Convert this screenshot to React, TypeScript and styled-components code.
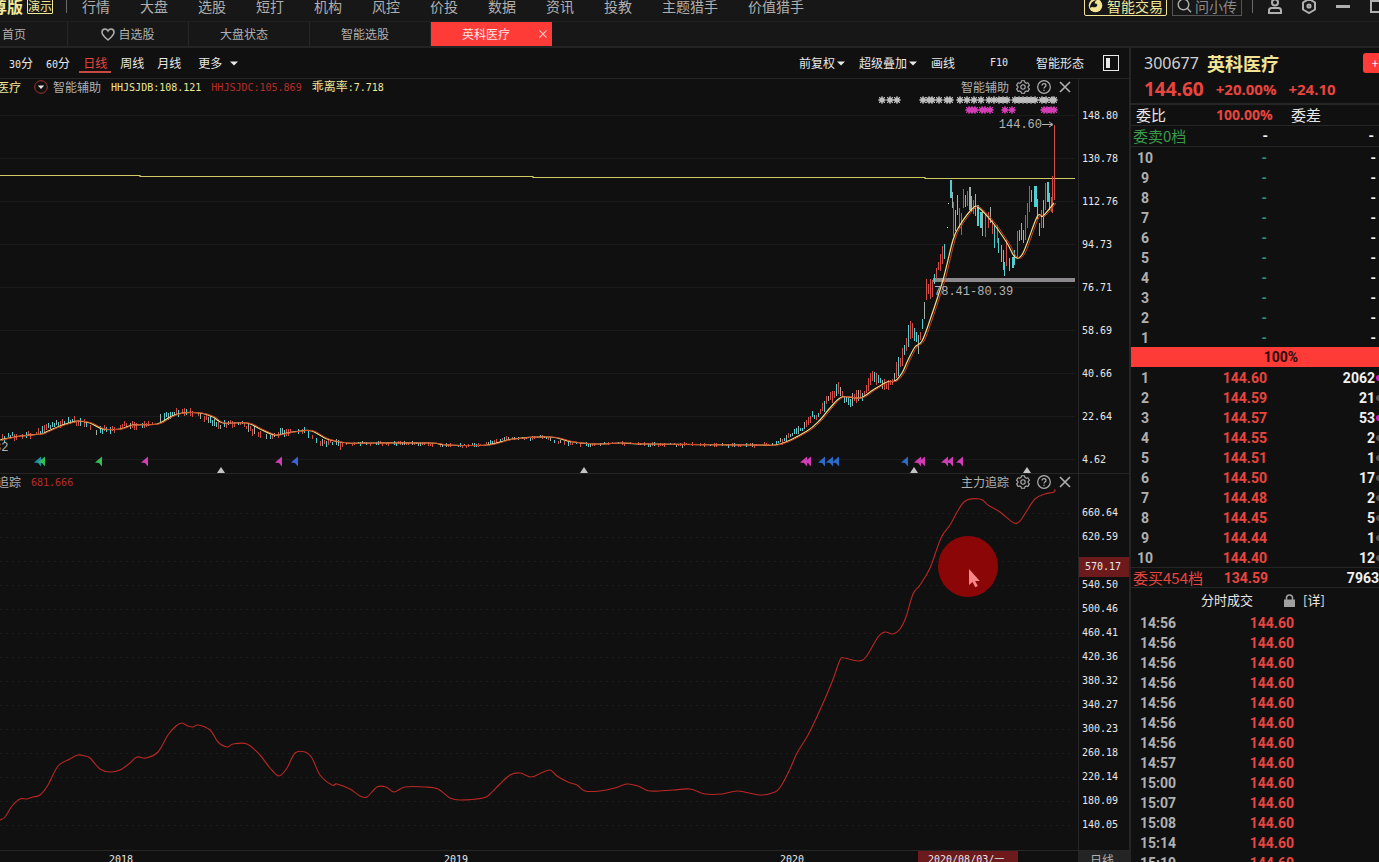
import React from "react";
import styled, { createGlobalStyle } from "styled-components";

const CJK = `"Noto Sans CJK SC", sans-serif`;
const MONO = `"DejaVu Sans Mono", "Noto Sans CJK SC", monospace`;
const FIGURES = `Roboto, "Noto Sans CJK SC", sans-serif`;

const color = {
  page: "#101010",
  bar: "#171717",
  line: "#262626",
  text: "#b0b0b0",
  bright: "#e8e8e8",
  red: "#e8453f",
  hot: "#ff3b38",
  yellow: "#efe79a",
  gold: "#f3e394",
  green: "#3a9c49",
  magenta: "#d23cb4",
  blue: "#2c6cc8",
};

const GlobalStyle = createGlobalStyle`
  * { box-sizing: border-box; }
  body { margin: 0; background: ${color.page}; color: ${color.text}; font: 12px/16px ${CJK}; }
  button, input { font: inherit; color: inherit; background: none; border: 0; padding: 0; margin: 0; }
  button { cursor: pointer; white-space: nowrap; }
  svg { display: block; flex: none; }
`;

const Shell = styled.div`
  display: flex;
  flex-direction: column;
  height: 100vh;
  overflow: hidden;
`;

/* ---------- top bar ---------- */

const TopBar = styled.header`
  display: flex;
  align-items: center;
  flex: none;
  height: 32px;
  margin-top: -10px;
  background: ${color.bar};
  border-bottom: 1px solid #202020;
  font-size: 14px;
  line-height: 20px;
  overflow: hidden;
`;

const Brand = styled.strong`
  margin-left: -9px;
  font-size: 16px;
  color: ${color.yellow};
  white-space: nowrap;
`;

const DemoBadge = styled.span`
  margin: 0 13px 0 4px;
  border: 1px solid ${color.yellow};
  border-radius: 1px;
  color: ${color.yellow};
  font-size: 12px;
  line-height: 14px;
  white-space: nowrap;
`;

const Divider = styled.i`
  width: 1px;
  height: 14px;
  background: #6a6a6a;
`;

const MainNav = styled.nav`
  display: flex;
  flex: 1;
  gap: 30px;
  min-width: 0;
  padding-left: 15px;
  overflow: hidden;
`;

const NavLink = styled.a`
  color: ${color.text};
  text-decoration: none;
  white-space: nowrap;
`;

const TradeButton = styled.button`
  display: flex;
  align-items: center;
  gap: 4px;
  height: 21px;
  padding: 0 3px;
  border: 1px solid ${color.gold};
  border-radius: 2px;
  color: ${color.yellow};
`;

const SearchBox = styled.label`
  display: flex;
  align-items: center;
  gap: 3px;
  height: 21px;
  margin: 0 10px 0 5px;
  padding: 0 4px;
  border: 1px solid #555;
  input { width: 42px; height: 19px; outline: 0; }
  input::placeholder { color: #8c8c8c; opacity: 1; }
`;

const WindowButtons = styled.div`
  display: flex;
  align-items: center;
  gap: 18px;
  margin: 0 -6px 0 14px;
`;

/* ---------- page tabs ---------- */

const TabBar = styled.nav`
  display: flex;
  flex: none;
  height: 26px;
  background: ${color.bar};
  border-bottom: 2px solid #232323;
`;

const Tab = styled.button<{ $active?: boolean; $first?: boolean; $shift?: boolean }>`
  position: relative;
  display: flex;
  align-items: center;
  justify-content: ${(p) => (p.$first ? "flex-start" : "center")};
  gap: 3px;
  width: ${(p) => (p.$first ? 68 : 121)}px;
  padding: 0 ${(p) => (p.$shift ? 10 : 0)}px 0 ${(p) => (p.$first ? 2 : 0)}px;
  border-right: 1px solid ${(p) => (p.$active ? color.hot : color.line)};
  background: ${(p) => (p.$active ? color.hot : "transparent")};
  color: ${(p) => (p.$active ? "#ffe4e0" : color.text)};
`;

const TabClose = styled.span`
  position: absolute;
  right: 3px;
  top: 7px;
`;

/* ---------- body ---------- */

const Body = styled.main`
  display: flex;
  flex: 1;
  min-height: 0;
`;

const ChartColumn = styled.section`
  display: flex;
  flex: 1;
  flex-direction: column;
  min-width: 0;
`;

const Toolbar = styled.div`
  display: flex;
  align-items: center;
  flex: none;
  height: 31px;
  padding: 0 10px 0 5px;
  border-bottom: 1px solid ${color.line};
  color: ${color.bright};
`;

const Periods = styled.div`
  display: flex;
  flex: 1;
  gap: 5px;
`;

const Period = styled.button<{ $active?: boolean }>`
  height: 20px;
  padding: 2px 4px 0;
  border-bottom: 2px solid ${(p) => (p.$active ? "#c84844" : "transparent")};
  color: ${(p) => (p.$active ? color.red : "inherit")};
`;

const MorePeriods = styled(Period)`
  display: flex;
  align-items: center;
  gap: 8px;
  margin-left: 4px;
`;

const ToolButton = styled.button`
  display: flex;
  align-items: center;
  gap: 2px;
`;

const Tools = styled.div`
  display: flex;
  align-items: center;
  gap: 14px;
  margin-right: 35px;
`;

const WideTools = styled.div`
  display: flex;
  align-items: center;
  gap: 19px;
  button:first-child { margin-right: 9px; }
`;

const Mono = styled.span`
  font: 10px/16px ${MONO};
`;

const Pane = styled.section<{ $grow?: boolean }>`
  display: flex;
  flex: ${(p) => (p.$grow ? "1 1 0" : "none")};
  min-height: 0;
  border-bottom: 1px solid ${color.line};
  overflow: hidden;
`;

const Plot = styled.div`
  position: relative;
  flex: 1;
  min-width: 0;
`;

const Chart = styled.svg<{ $height: number }>`
  width: 100%;
  height: ${(p) => p.$height}px;
`;

const PaneHead = styled.div`
  position: absolute;
  inset: 0 0 auto 0;
  display: flex;
  align-items: center;
  justify-content: space-between;
  height: 16px;
  padding-right: 6px;
`;

const Legend = styled.div`
  display: flex;
  align-items: center;
  gap: 10px;
  margin-left: -3px;
  white-space: nowrap;
`;

const LegendName = styled.span`
  display: flex;
  align-items: center;
  gap: 5px;
  margin-left: 3px;
`;

const Value = styled.span<{ $tone: string }>`
  font: 12px/16px ${CJK};
  color: ${(p) => p.$tone};
`;

const PaneActions = styled.div`
  display: flex;
  align-items: center;
  gap: 7px;
`;

const PlotLabel = styled.span`
  position: absolute;
  font: 12px/14px "Liberation Mono", monospace;
  color: #b4b4b4;
  white-space: nowrap;
`;

const Scale = styled.ol<{ $top: number; $step: number }>`
  position: relative;
  flex: none;
  width: 51px;
  margin: 0;
  padding: ${(p) => p.$top}px 0 0 3px;
  border-left: 1px solid ${color.line};
  list-style: none;
  font: 10px/16px ${MONO};
  color: ${color.bright};
  li { height: ${(p) => p.$step}px; line-height: ${(p) => p.$step}px; }
  li:last-of-type { margin-bottom: -10px; }
`;

const ScaleCursor = styled.div`
  position: absolute;
  left: 0;
  top: 83px;
  width: 50px;
  height: 20px;
  padding-left: 6px;
  background: #6c1a1c;
  line-height: 20px;
`;

const TimeAxis = styled.div`
  display: flex;
  flex: none;
  height: 11px;
  overflow: hidden;
  line-height: 18px;
`;

const TimeTrack = styled.div`
  position: relative;
  flex: 1;
  font: 10px/18px ${MONO};
  color: ${color.bright};
`;

const TimeMark = styled.time<{ $cursor?: boolean }>`
  position: absolute;
  top: 0;
  width: ${(p) => (p.$cursor ? "100px" : "auto")};
  padding-left: ${(p) => (p.$cursor ? 10 : 0)}px;
  background: ${(p) => (p.$cursor ? "#6c1a1c" : "transparent")};
  white-space: nowrap;
`;

const AxisPeriod = styled.span`
  width: 51px;
  padding-left: 12px;
  background: #242424;
`;

/* ---------- quote panel ---------- */

const Quote = styled.aside`
  flex: none;
  width: 250px;
  border-left: 2px solid #252525;
  overflow: hidden;
`;

const QuoteHead = styled.div`
  height: 57px;
  padding: 2px 0 0 13px;
  border-bottom: 2px solid ${color.line};
`;

const QuoteLine = styled.div<{ $gap: number }>`
  display: flex;
  align-items: center;
  gap: ${(p) => p.$gap}px;
  height: 26px;
  white-space: nowrap;
`;

const Code = styled.span`
  font: 16px/24px "Noto Sans", sans-serif;
  color: #d0d0d0;
`;

const StockName = styled.h1`
  margin: 0;
  font: bold 18px/24px ${CJK};
  color: ${color.gold};
`;

const AddButton = styled.button`
  width: 24px;
  height: 20px;
  margin: 0 -8px 0 auto;
  border-radius: 3px;
  background: ${color.hot};
  color: #fff;
`;

const Price = styled.strong<{ $big?: boolean }>`
  font: bold ${(p) => (p.$big ? 19 : 15)}px/26px "Open Sans", sans-serif;
  color: ${color.red};
`;

const RatioRow = styled.div`
  display: grid;
  grid-template-columns: 80px 75px 1fr;
  height: 21px;
  padding-left: 5px;
  border-bottom: 1px solid ${color.line};
  font-size: 15px;
  line-height: 20px;
  color: ${color.bright};
  strong { font: bold 14px/20px "Open Sans", sans-serif; color: ${color.red}; }
`;

const Book = styled.table`
  width: 100%;
  border-collapse: collapse;
  table-layout: fixed;
  font: bold 14px/18px ${FIGURES};
  color: ${color.bright};
  th, td { height: 20px; padding: 2px 0 0; font-weight: bold; text-align: right; }
  th { width: 28px; text-align: center; color: ${color.text}; }
  td { color: ${color.red}; }
  td:last-child { color: #f2f2f2; }
  td:nth-child(2) { width: 108px; }
`;

const AskBook = styled(Book)`
  td { color: #2f8f77; }
  td:last-child { padding-right: 3px; }
`;

const Dot = styled.i<{ $tone: string }>`
  display: inline-block;
  width: 3px;
  height: 6px;
  margin: 0 0 2px 1px;
  border-radius: 3px 0 0 3px;
  background: ${(p) => p.$tone};
`;

const SumRow = styled.div<{ $tone: string; $line?: boolean }>`
  display: grid;
  grid-template-columns: 135px 1fr;
  height: 21px;
  padding: 0 0 0 2px;
  border-bottom: 1px solid ${color.line};
  border-top: ${(p) => (p.$line ? "1px solid " + color.line : "0")};
  font-size: 15px;
  line-height: 20px;
  color: ${(p) => p.$tone};
  white-space: nowrap;
`;

const SumLabel = styled.span`
  display: flex;
  justify-content: space-between;
  b { font: bold 14px/20px ${FIGURES}; }
`;

const SumVolume = styled.b<{ $inset?: boolean }>`
  padding-right: ${(p) => (p.$inset ? 5 : 0)}px;
  font: bold 14px/20px ${FIGURES};
  color: #f2f2f2;
  text-align: right;
`;

const Empty = styled.b`
  color: #f2f2f2;
`;

const RatioBar = styled.div`
  height: 20px;
  padding-left: 52px;
  background: ${color.hot};
  color: #2a0c0c;
  font: bold 14px/20px ${FIGURES};
  text-align: center;
`;

const TradesHead = styled.div`
  display: flex;
  align-items: center;
  height: 24px;
  padding-left: 70px;
  font-size: 13px;
  color: ${color.bright};
  h2 { margin: 0 31px 0 0; font: inherit; }
  svg { margin-right: 8px; }
`;

const Trades = styled(Book)`
  th { width: 54px; }
  td:last-child { width: auto; padding-right: 85px; color: ${color.red}; }
`;

/* ---------- icons ---------- */

const Caret = () => (
  <svg width="8" height="5" viewBox="0 0 8 5"><path d="M0 .5h8L4 4.500z" fill={color.bright} /></svg>
);
const Cross = ({ size = 12, tone = color.text }: { size?: number; tone?: string }) => (
  <svg width={size} height={size} viewBox="0 0 14 14"><path d="M2 2l10 10M12 2L2 12" stroke={tone} strokeWidth="1.600" /></svg>
);
const Heart = () => (
  <svg width="14" height="13" viewBox="0 0 14 13">
    <path d="M7 12C4 9.500 1 7.200 1 4.300 1 2.400 2.300 1 4 1c1.300 0 2.400.8 3 2 .6-1.200 1.700-2 3-2 1.700 0 3 1.400 3 3.300C13 7.200 10 9.500 7 12z" fill="none" stroke={color.text} strokeWidth="1.500" />
  </svg>
);
const Gear = () => (
  <svg width="14" height="14" viewBox="0 0 14 14" fill="none" stroke={color.text} strokeWidth="1.100" strokeLinejoin="round">
    <path d="M5.500.8h3l.5 1.700 1.200.7 1.700-.5 1.500 2.600-1.300 1.200v1.200l1.300 1.200-1.500 2.500-1.700-.4-1.200.7-.5 1.600h-3L5 11.700 3.800 11l-1.700.4L.6 8.900l1.300-1.200V6.500L.6 5.300l1.500-2.600 1.700.5L5 2.500z" />
    <circle cx="7" cy="7" r="2.200" />
  </svg>
);
const Help = () => (
  <svg width="14" height="14" viewBox="0 0 14 14" fill="none" stroke={color.text} strokeWidth="1.200">
    <circle cx="7" cy="7" r="6.300" />
    <path d="M5 5.600C5 4.300 5.900 3.600 7 3.600s2 .7 2 1.800C9 6.700 7 6.900 7 8.600M7 9.700v1.200" />
  </svg>
);
const RoundCaret = () => (
  <svg width="14" height="14" viewBox="0 0 14 14">
    <circle cx="7" cy="7" r="6.300" fill="none" stroke="#a8302c" /><path d="M3.800 5.500h6.400L7 9z" fill="#e8e8e8" />
  </svg>
);
const TradeLogo = () => (
  <svg width="15" height="15" viewBox="0 0 15 15">
    <circle cx="7.500" cy="7.500" r="6.800" fill={color.gold} />
    <path d="M2 9.500C2 5.500 5 2.200 9 2 7.300 3 6.600 4.200 6.800 5.500c1.700-.3 2.700.6 2.400 2C8.800 9 7 9.600 5.200 9.200 4.500 9 3.200 9 2.600 10z" fill={color.bar} />
  </svg>
);
const Search = () => (
  <svg width="15" height="15" viewBox="0 0 15 15" fill="none" stroke={color.text} strokeWidth="1.400">
    <circle cx="6.500" cy="6.500" r="5.300" /><path d="M10.300 10.300l3.700 3.900" />
  </svg>
);
const User = () => (
  <svg width="16" height="16" viewBox="0 0 16 16" fill="none" stroke={color.text} strokeWidth="2">
    <circle cx="8" cy="4.500" r="3" /><path d="M2 15v-2.500C2 11 3 10 4.500 10h7c1.500 0 2.500 1 2.500 2.500V15z" />
  </svg>
);
const Hexagon = () => (
  <svg width="16" height="16" viewBox="0 0 16 16" fill="none" stroke={color.text} strokeWidth="2">
    <path d="M8 1l6 3.500v7L8 15l-6-3.500v-7z" /><circle cx="8" cy="8" r="1.600" />
  </svg>
);
const Minus = () => (
  <svg width="16" height="16" viewBox="0 0 16 16"><path d="M1 8.500h14" stroke={color.text} strokeWidth="3" /></svg>
);
const Maximize = () => (
  <svg width="16" height="16" viewBox="0 0 16 16"><rect x="2" y="3" width="12" height="11" fill="none" stroke={color.text} strokeWidth="2" /></svg>
);
const SidePanel = () => (
  <svg width="16" height="16" viewBox="0 0 16 16">
    <rect x=".5" y=".5" width="15" height="15" fill="none" stroke={color.bright} /><path d="M3 3h4v10H3z" fill={color.bright} />
  </svg>
);
const Lock = () => (
  <svg width="11" height="13" viewBox="0 0 11 13">
    <path d="M0 5.500h11V13H0z" fill="#a0a0a0" /><path d="M2.500 6V3.800C2.500 2 3.800 1 5.500 1s3 1 3 2.800V6" fill="none" stroke="#a0a0a0" strokeWidth="1.600" />
  </svg>
);

/* ---------- chart data ---------- */

type Point = [number, number];

const average: Point[] = [
  [0, 440], [20, 436], [41, 434], [46, 432], [60, 426], [73, 422], [78, 421], [90, 423], [103, 429], [120, 429],
  [133, 425], [157, 424], [170, 417], [182, 413], [200, 413], [213, 417], [223, 423], [247, 423], [260, 429],
  [275, 435], [287, 433], [300, 431], [312, 431], [327, 439], [347, 443], [373, 443], [430, 443], [447, 445],
  [487, 445], [513, 439], [550, 437], [573, 442], [597, 444], [620, 443], [650, 444], [753, 445], [780, 444],
  [807, 431], [820, 420], [830, 408], [842, 397], [860, 398], [873, 390], [887, 382], [895, 381], [902, 373],
  [908, 360], [915, 347], [922, 341], [930, 320], [943, 280], [953, 240], [960, 225], [973, 208], [979, 208],
  [993, 223], [1007, 243], [1015, 257], [1023, 253], [1037, 217], [1043, 216], [1054, 203],
];

const rally: Point[] = [
  [780, 441], [787, 437], [795, 431], [803, 428], [807, 424], [812, 415], [818, 415], [823, 406], [828, 396],
  [833, 397], [837, 386], [841, 394], [846, 400], [850, 402], [857, 396], [863, 395], [866, 388], [871, 375],
  [876, 378], [882, 383], [889, 385], [893, 380], [897, 368], [901, 358], [906, 342], [910, 330], [914, 334],
  [918, 342], [920, 337], [924, 312], [926, 290], [932, 288], [935, 274], [940, 262], [945, 247],
];

type Candle = [number, number, number, 0 | 1, number?];

const recent: Candle[] = [
  [950, 180, 198, 1, 2], [952, 192, 208, 1], [953, 202, 236, 0], [955, 210, 231, 1], [957, 195, 215, 1],
  [959, 208, 228, 0], [961, 213, 235, 0], [963, 189, 208, 0], [965, 195, 207, 1], [967, 191, 206, 0],
  [969, 187, 210, 1, 2], [971, 196, 212, 1], [973, 200, 214, 0], [975, 194, 216, 1], [977, 205, 226, 1, 2],
  [980, 212, 228, 1, 2], [982, 211, 236, 1], [985, 214, 237, 0], [988, 212, 228, 0], [990, 207, 223, 1],
  [992, 220, 234, 0], [994, 225, 248, 1], [997, 225, 243, 0], [998, 238, 253, 1], [1001, 245, 262, 1],
  [1003, 250, 270, 1], [1004, 262, 276, 1], [1006, 240, 266, 0], [1009, 258, 271, 1], [1012, 257, 268, 1, 2],
  [1014, 250, 265, 1], [1017, 231, 258, 0], [1019, 230, 241, 1], [1021, 223, 240, 1], [1023, 230, 243, 1],
  [1025, 215, 240, 0], [1027, 203, 228, 0], [1029, 186, 212, 0], [1031, 190, 202, 1], [1034, 186, 207, 1, 3],
  [1037, 199, 219, 1], [1039, 223, 236, 1], [1041, 210, 228, 0], [1043, 200, 228, 1], [1045, 183, 210, 0],
  [1047, 182, 202, 1, 2], [1049, 193, 210, 1], [1051, 197, 212, 0], [1052, 176, 213, 0], [1054, 125, 200, 0],
];

const tracking: Point[] = [
  [0, 820], [5, 817], [12, 806], [20, 799], [27, 799], [33, 797], [40, 795], [48, 785], [58, 766], [70, 759],
  [78, 755], [85, 756], [90, 758], [100, 769], [110, 772], [120, 770], [130, 763], [137, 757], [146, 758],
  [158, 752], [168, 735], [176, 726], [182, 723], [188, 726], [193, 727], [198, 725], [210, 730], [218, 742],
  [227, 747], [233, 744], [247, 744], [260, 755], [270, 768], [279, 776], [287, 768], [295, 753], [305, 752],
  [312, 758], [320, 775], [332, 785], [337, 784], [350, 789], [360, 796], [367, 797], [377, 787], [386, 787],
  [394, 792], [405, 787], [425, 787], [438, 789], [450, 798], [460, 800], [483, 798], [490, 794], [500, 784],
  [510, 775], [520, 773], [531, 777], [541, 773], [550, 770], [557, 776], [568, 782], [577, 785], [585, 791],
  [600, 791], [615, 788], [627, 784], [638, 786], [650, 791], [673, 790], [690, 789], [705, 794], [722, 794],
  [738, 791], [760, 795], [775, 792], [781, 786], [790, 769], [797, 753], [808, 735], [820, 710], [832, 682],
  [840, 660], [844, 658], [858, 661], [866, 657], [878, 637], [885, 632], [893, 634], [900, 629], [906, 617],
  [913, 594], [920, 585], [930, 568], [941, 538], [950, 525], [964, 502], [980, 499], [988, 505], [1000, 512],
  [1014, 523], [1020, 521], [1026, 512], [1035, 499], [1045, 494], [1054, 492], [1055, 489],
];

const curve = (pts: Point[], dx = 0, dy = 0) =>
  pts
    .map(([x, y], i) => {
      if (i === 0) return `M${x + dx} ${y + dy}`;
      const a = pts[Math.max(i - 2, 0)];
      const b = pts[i - 1];
      const d = pts[Math.min(i + 1, pts.length - 1)];
      const c1 = [b[0] + (x - a[0]) / 6, b[1] + (y - a[1]) / 6];
      const c2 = [x - (d[0] - b[0]) / 6, y - (d[1] - b[1]) / 6];
      return `C${c1[0] + dx} ${c1[1] + dy} ${c2[0] + dx} ${c2[1] + dy} ${x + dx} ${y + dy}`;
    })
    .join("");

const at = (pts: Point[], x: number) => {
  const i = Math.max(1, pts.findIndex((p) => p[0] >= x));
  const [x0, y0] = pts[i - 1];
  const [x1, y1] = pts[i];
  return y0 + ((y1 - y0) * (x - x0)) / (x1 - x0);
};

const noise = (n: number) => {
  const v = Math.sin(n * 127.1) * 43758.5453;
  return v - Math.floor(v);
};

const history: Candle[] = [];
for (let x = 2; x < 946; x += 2) {
  const rising = x >= 780;
  const lead = at(average, x + 6);
  const mid = rising ? at(rally, Math.min(x, 944)) : lead + (lead - at(average, Math.max(x - 2, 0))) * 0.6;
  const calm = x > 340 && x < 780;
  if (!rising && noise(x + 3) < 0.3) continue;
  const size = calm ? 1 + noise(x) * 2 : x > 895 ? 7 + noise(x) * 14 : x > 820 ? 3 + noise(x) * 9 : 2 + noise(x) * 5;
  const m = mid + (noise(x + 0.5) - 0.5) * (calm ? 2 : 4);
  history.push([x, Math.round(m - size / 2), Math.round(m + size / 2) + 1, noise(x + 7) > 0.5 ? 1 : 0]);
}
const candles = history.concat(recent);

const stars = [
  882, 890, 897, 923, 929, 932, 939, 947, 950, 960, 967, 974, 981, 989, 994, 999, 1003, 1007, 1015, 1019, 1023,
  1027, 1031, 1035, 1042, 1046, 1052, 1054,
];
const pinkStars = [969, 972, 975, 982, 985, 990, 1005, 1012, 1044, 1047, 1051, 1054];

const flags: [number, string][] = [
  [38, "#1c8fa8"], [42, "#34c058"], [99, "#34c058"], [145, color.magenta], [279, color.magenta], [295, "#3f62dc"],
  [804, color.magenta], [808, color.magenta], [822, color.blue], [830, color.blue], [836, color.blue],
  [905, color.blue], [918, color.magenta], [922, color.magenta], [945, color.magenta], [950, color.magenta],
  [960, color.magenta],
];

const Star = ({ x, y, tone }: { x: number; y: number; tone: string }) => (
  <g transform={`translate(${x} ${y})`}>
    <circle r="2.800" fill={tone} />
    <path d="M-4 0H4M0-4V4M-3-3L3 3M3-3L-3 3" stroke={tone} strokeWidth="1" />
  </g>
);

const PriceChart = () => (
  <Chart $height={394} viewBox="0 79 1078 394" preserveAspectRatio="none" role="img" aria-label="日线走势">
    {[115, 158, 201, 244, 287, 330, 373, 416, 459].map((y) => (
      <path key={y} d={`M0 ${y + 0.5}H1075`} stroke="#1b1b1b" />
    ))}
    <path d="M0 175.500H140V176.500H533V177.500H925V178.500H1075" fill="none" stroke="#cfcb62" strokeWidth="1.200" />
    <path d="M933 278h142v4H933z" fill="#8b898b" />
    {candles.map(([x, hi, lo, down, w = 1], i) => (
      <rect key={i} x={x} y={hi} width={w} height={lo - hi} fill={down ? (i % 3 ? "#52cfd0" : "#9fb0a8") : "#d04d48"} />
    ))}
    <path d="M948 203h1v1h-1zM947 227h1v1h-1z" fill="#ddd" />
    <path d={curve(average)} fill="none" stroke="#f4e08a" strokeWidth="1.200" />
    <path d={curve(average, 2, 0)} fill="none" stroke="#c8401f" strokeWidth="1" />
    {stars.map((x) => <Star key={x} x={x} y={100} tone="#bdbdbd" />)}
    {pinkStars.map((x) => <Star key={x} x={x} y={110} tone={color.magenta} />)}
    <path d="M1042 124.500h10M1049 122l4 2.500-4 2.500" fill="none" stroke="#b4b4b4" />
    {flags.map(([x, tone]) => (
      <path key={x} d={`M${x - 4} 462.500L${x + 3} 456.500V466.500L${x} 463z`} fill={tone} />
    ))}
    {[221, 584, 914, 1027].map((x) => (
      <path key={x} d={`M${x - 4} 473L${x} 467L${x + 4} 473z`} fill="#c4c4c4" />
    ))}
  </Chart>
);

const TrackingChart = () => (
  <Chart $height={376} viewBox="0 474 1078 376" preserveAspectRatio="none" role="img" aria-label="主力追踪曲线">
    {Array.from({ length: 14 }, (_, i) => (
      <path key={i} d={`M0 ${513.5 + i * 24}H1075`} stroke="#1c1c1c" strokeDasharray="2 4" />
    ))}
    <path d={curve(tracking)} fill="none" stroke="#b82824" strokeWidth="1.100" />
    <ellipse cx="968" cy="566.500" rx="30" ry="30.500" fill="#8a0607" />
    <path d="M969 569v16l3.500-3 2.800 5.200 2.500-1.200-2.600-5h4.600z" fill="#f98686" />
  </Chart>
);

/* ---------- page data ---------- */

const navItems = ["行情", "大盘", "选股", "短打", "机构", "风控", "价投", "数据", "资讯", "投教", "主题猎手", "价值猎手"];
const prices = ["148.80", "130.78", "112.76", "94.73", "76.71", "58.69", "40.66", "22.64", "4.62"];
const levels = [
  "660.64", "620.59", "", "540.50", "500.46", "460.41", "420.36", "380.32", "340.27", "300.23", "260.18", "220.14",
  "180.09", "140.05",
];
const bids = [
  ["144.60", "2062"], ["144.59", "21"], ["144.57", "53"], ["144.55", "2"], ["144.51", "1"], ["144.50", "17"],
  ["144.48", "2"], ["144.45", "5"], ["144.44", "1"], ["144.40", "12"],
];
const times = [
  "14:56", "14:56", "14:56", "14:56", "14:56", "14:56", "14:56", "14:57", "15:00", "15:07", "15:08", "15:14", "15:19",
];
const years: [string, number][] = [["2018", 109], ["2019", 444], ["2020", 780]];

const percent = (x: number) => `${(x / 1078) * 100}%`;

const Actions = ({ name }: { name: string }) => (
  <PaneActions>
    <span>{name}</span>
    <button aria-label="设置"><Gear /></button>
    <button aria-label="帮助"><Help /></button>
    <button aria-label="关闭"><Cross size={14} /></button>
  </PaneActions>
);

export default function App() {
  return (
    <Shell>
      <GlobalStyle />
      <TopBar>
        <Brand>尊版</Brand>
        <DemoBadge>演示</DemoBadge>
        <Divider />
        <MainNav>
          {navItems.map((n) => <NavLink key={n} href="#">{n}</NavLink>)}
        </MainNav>
        <TradeButton><TradeLogo />智能交易</TradeButton>
        <SearchBox><Search /><input aria-label="搜索" placeholder="问小传" /></SearchBox>
        <Divider />
        <WindowButtons>
          <button aria-label="用户"><User /></button>
          <button aria-label="设置"><Hexagon /></button>
          <button aria-label="最小化"><Minus /></button>
          <button aria-label="最大化"><Maximize /></button>
        </WindowButtons>
      </TopBar>

      <TabBar>
        <Tab $first>首页</Tab>
        <Tab><Heart />自选股</Tab>
        <Tab $shift>大盘状态</Tab>
        <Tab $shift>智能选股</Tab>
        <Tab $shift $active>英科医疗<TabClose><Cross size={10} tone="#ffc4c0" /></TabClose></Tab>
      </TabBar>

      <Body>
        <ChartColumn>
          <Toolbar>
            <Periods>
              <Period><Mono>30</Mono>分</Period>
              <Period><Mono>60</Mono>分</Period>
              <Period $active>日线</Period>
              <Period>周线</Period>
              <Period>月线</Period>
              <MorePeriods>更多<Caret /></MorePeriods>
            </Periods>
            <Tools>
              <ToolButton>前复权<Caret /></ToolButton>
              <ToolButton>超级叠加<Caret /></ToolButton>
              <ToolButton>画线</ToolButton>
            </Tools>
            <WideTools>
              <ToolButton><Mono>F10</Mono></ToolButton>
              <ToolButton>智能形态</ToolButton>
              <ToolButton aria-label="侧栏"><SidePanel /></ToolButton>
            </WideTools>
          </Toolbar>

          <Pane>
            <Plot>
              <PriceChart />
              <PaneHead>
                <Legend>
                  <Value $tone={color.yellow}>医疗</Value>
                  <LegendName><RoundCaret />智能辅助</LegendName>
                  <Value $tone={color.yellow}><Mono>HHJSJDB:108.121</Mono></Value>
                  <Value $tone="#b82c28"><Mono>HHJSJDC:105.869</Mono></Value>
                  <Value $tone={color.yellow}>乖离率<Mono>:7.718</Mono></Value>
                </Legend>
                <Actions name="智能辅助" />
              </PaneHead>
              <PlotLabel style={{ right: percent(36), top: 39 }}>144.60</PlotLabel>
              <PlotLabel style={{ left: percent(934), top: 206 }}>78.41-80.39</PlotLabel>
              <PlotLabel style={{ left: percent(-6), top: 362 }}>32</PlotLabel>
            </Plot>
            <Scale $top={15} $step={43}>
              {prices.map((p) => <li key={p}>{p}</li>)}
            </Scale>
          </Pane>

          <Pane $grow>
            <Plot>
              <TrackingChart />
              <PaneHead>
                <Legend>
                  <span>追踪</span>
                  <Value $tone="#b82c28"><Mono>681.666</Mono></Value>
                </Legend>
                <Actions name="主力追踪" />
              </PaneHead>
            </Plot>
            <Scale $top={27} $step={24}>
              {levels.map((p, i) => <li key={i}>{p}</li>)}
              <ScaleCursor>570.17</ScaleCursor>
            </Scale>
          </Pane>

          <TimeAxis>
            <TimeTrack>
              {years.map(([y, x]) => (
                <TimeMark key={y} style={{ left: percent(x) }}>{y}</TimeMark>
              ))}
              <TimeMark $cursor style={{ left: percent(918) }}>2020/08/03/一</TimeMark>
            </TimeTrack>
            <AxisPeriod>日线</AxisPeriod>
          </TimeAxis>
        </ChartColumn>

        <Quote>
          <QuoteHead>
            <QuoteLine $gap={8}>
              <Code>300677</Code>
              <StockName>英科医疗</StockName>
              <AddButton aria-label="加自选">+</AddButton>
            </QuoteLine>
            <QuoteLine $gap={12}>
              <Price $big>144.60</Price>
              <Price>+20.00%</Price>
              <Price>+24.10</Price>
            </QuoteLine>
          </QuoteHead>
          <RatioRow><span>委比</span><strong>100.00%</strong><span>委差</span></RatioRow>
          <SumRow $tone={color.green}>
            <SumLabel>委卖0档 <Empty>-</Empty></SumLabel>
            <SumVolume $inset>-</SumVolume>
          </SumRow>
          <AskBook>
            <tbody>
              {[10, 9, 8, 7, 6, 5, 4, 3, 2, 1].map((n) => (
                <tr key={n}><th scope="row">{n}</th><td>-</td><td>-</td></tr>
              ))}
            </tbody>
          </AskBook>
          <RatioBar>100%</RatioBar>
          <Book>
            <tbody>
              {bids.map(([price, volume], i) => (
                <tr key={price}>
                  <th scope="row">{i + 1}</th>
                  <td>{price}</td>
                  <td>{volume}<Dot $tone={i === 0 || i === 2 ? "#d020d0" : "#555"} /></td>
                </tr>
              ))}
            </tbody>
          </Book>
          <SumRow $tone={color.red} $line>
            <SumLabel>委买454档 <b>134.59</b></SumLabel>
            <SumVolume>7963</SumVolume>
          </SumRow>
          <TradesHead><h2>分时成交</h2><Lock /><button>[详]</button></TradesHead>
          <Trades>
            <tbody>
              {times.map((t, i) => (
                <tr key={i}><th scope="row">{t}</th><td>144.60</td></tr>
              ))}
            </tbody>
          </Trades>
        </Quote>
      </Body>
    </Shell>
  );
}
